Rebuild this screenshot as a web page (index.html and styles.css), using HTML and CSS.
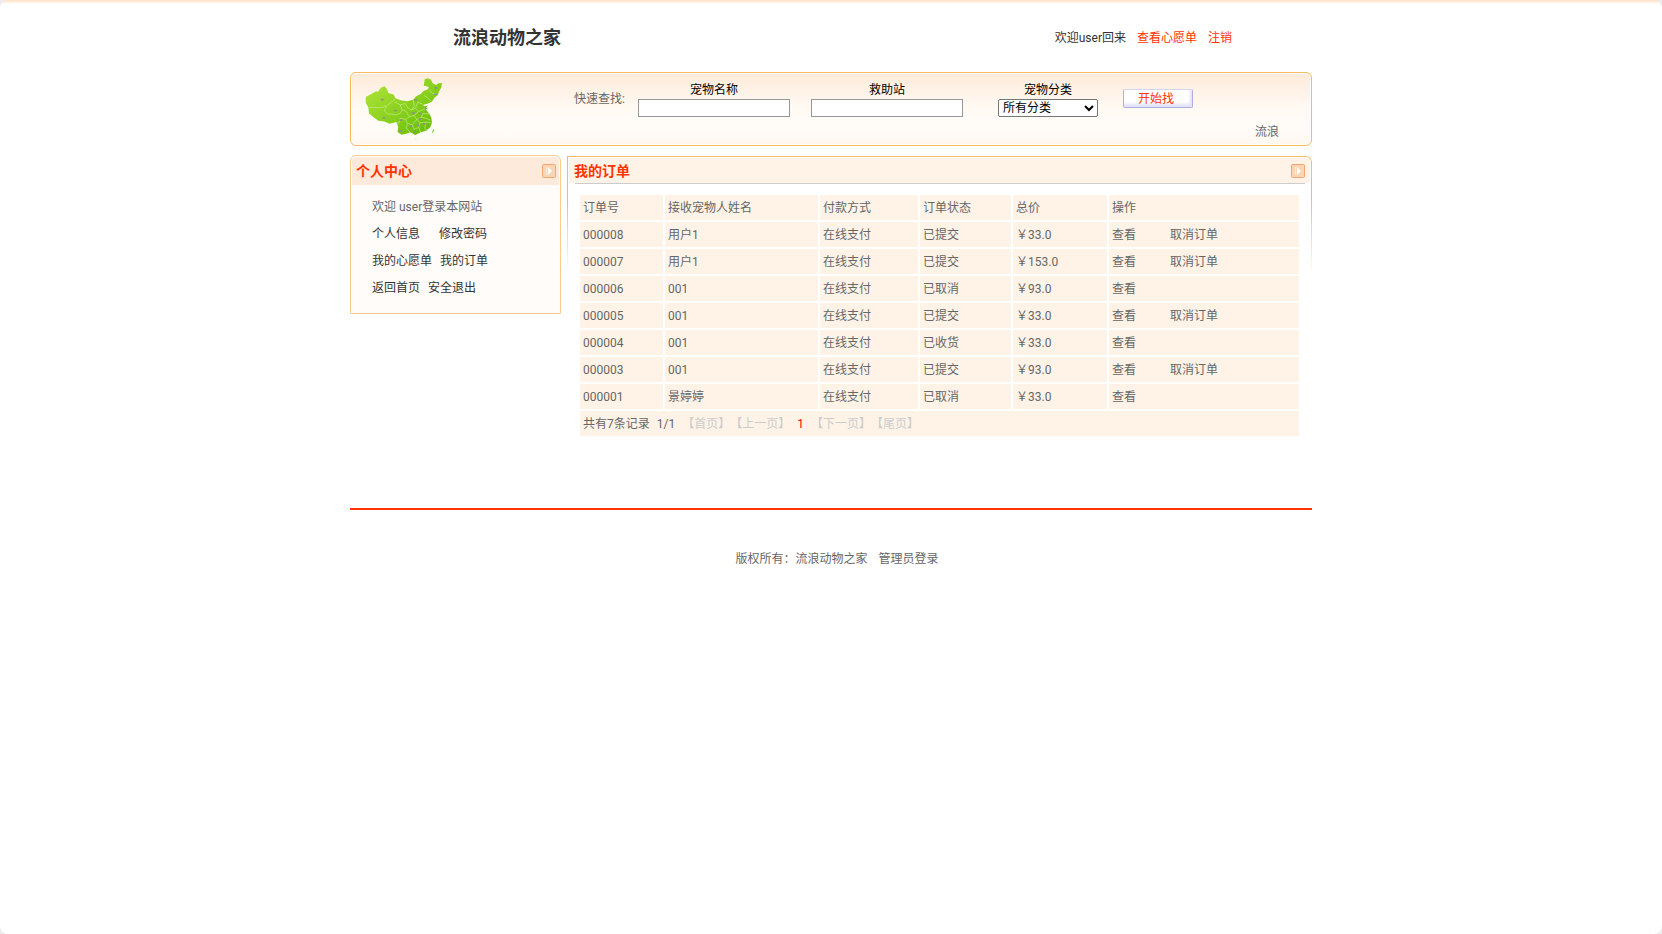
FILE: index.html
```html
<!DOCTYPE html>
<html lang="zh-CN">
<head>
<meta charset="UTF-8">
<meta name="viewport" content="width=device-width, initial-scale=1.0">
<title>流浪动物之家</title>
<link rel="stylesheet" href="styles.css">
</head>
<body>

<div class="wrap">

<header class="top">
<h1>流浪动物之家</h1>
<div class="user">
<span>欢迎user回来</span>
<a class="hot" href="#">查看心愿单</a>
<a class="hot" href="#">注销</a>
</div>
</header>

<form class="search" action="#">
<svg class="map" viewBox="45 25 230 187" aria-hidden="true">
<defs>
<linearGradient id="land" x1="0" y1="0" x2="1" y2="1">
<stop offset="0" stop-color="#b4e63c"/>
<stop offset="0.55" stop-color="#86cf1c"/>
<stop offset="1" stop-color="#5fb800"/>
</linearGradient>
</defs>
<path fill="url(#land)" d="M46 82L60 75L76 66L84 66L92 54L103 50L110 58L114 70L130 75L136 86L152 92L172 95L190 90L198 80L212 73L220 64L232 60L237 54L230 50L221 48L224 28L234 26L243 30L248 41L258 46L266 41L276 40L274 54L267 66L264 76L254 84L246 96L234 102L220 106L221 110L234 108L226 118L239 134L244 146L246 160L240 174L228 184L212 189L196 197L180 189L168 193L154 196L142 188L144 172L138 158L118 163L102 156L84 154L68 142L56 132L54 114L46 100Z"/>
<path fill="#6fc408" d="M246 190L250 178L252 184L248 190ZM190 188L200 189L196 197L190 194Z"/>
<path class="line" d="M56 113L90 115L108 110L124 98L132 90L136 86M108 110L102 125L112 133L138 136L150 132L156 120L150 106L132 97M150 106L165 102L172 114L184 122L192 110L190 92M156 120L168 126L178 142L166 150L150 146L146 162L138 158M184 122L196 116L204 98L218 104M196 116L206 126L226 118M178 142L192 138L206 126M192 138L200 150L214 144L218 132L239 134M166 150L172 162L186 166L200 150M172 162L168 176L180 189M186 166L192 180L206 174L210 160L200 150M206 174L212 189M210 160L228 158L244 160M228 158L224 176L228 184M214 144L228 146L240 152M222 78L232 84L242 94M237 60L246 70L263 76"/>
<path class="dots" d="M92 90h8M132 123h8M97 145h8M193 91h8M254 55h8M253 74h8M148 152h8M186 131h8M207 132h8M206 149h8M200 168h8M190 187h8M148 185h8M178 171h8M219 163h8M224 117h8"/>
<path class="line" d="M195 209h4"/>
</svg>

<span class="quick">快速查找:</span>

<div class="field">
<label for="pet-name">宠物名称</label>
<input type="text" id="pet-name">
</div>

<div class="field">
<label for="station">救助站</label>
<input type="text" id="station">
</div>

<div class="field field-kind">
<label for="kind">宠物分类</label>
<select id="kind">
<option>所有分类</option>
</select>
</div>

<button class="go" type="submit">开始找</button>
<span class="tag">流浪</span>
</form>

<div class="main">

<aside class="side">
<div class="side-head">
<h2>个人中心</h2>
<svg class="arrow" viewBox="0 0 14 14" aria-hidden="true"><rect x="0.5" y="0.5" width="13" height="13" rx="1"/><path class="bar" d="M4.5 3v8"/><path d="M6 3l4 4l-4 4z"/></svg>
</div>
<ul>
<li>欢迎 user登录本网站</li>
<li class="wide"><a href="#">个人信息</a><a href="#">修改密码</a></li>
<li><a href="#">我的心愿单</a><a href="#">我的订单</a></li>
<li><a href="#">返回首页</a><a href="#">安全退出</a></li>
</ul>
</aside>

<section class="orders">
<div class="orders-head">
<h2>我的订单</h2>
<svg class="arrow" viewBox="0 0 14 14" aria-hidden="true"><rect x="0.5" y="0.5" width="13" height="13" rx="1"/><path class="bar" d="M4.5 3v8"/><path d="M6 3l4 4l-4 4z"/></svg>
</div>

<table>
<colgroup>
<col class="c-no"><col class="c-name"><col class="c-pay"><col class="c-state"><col class="c-sum"><col>
</colgroup>
<thead>
<tr><th>订单号</th><th>接收宠物人姓名</th><th>付款方式</th><th>订单状态</th><th>总价</th><th>操作</th></tr>
</thead>
<tbody>
<tr><td>000008</td><td>用户1</td><td>在线支付</td><td>已提交</td><td>￥33.0</td><td><a href="#">查看</a><a href="#">取消订单</a></td></tr>
<tr><td>000007</td><td>用户1</td><td>在线支付</td><td>已提交</td><td>￥153.0</td><td><a href="#">查看</a><a href="#">取消订单</a></td></tr>
<tr><td>000006</td><td>001</td><td>在线支付</td><td>已取消</td><td>￥93.0</td><td><a href="#">查看</a></td></tr>
<tr><td>000005</td><td>001</td><td>在线支付</td><td>已提交</td><td>￥33.0</td><td><a href="#">查看</a><a href="#">取消订单</a></td></tr>
<tr><td>000004</td><td>001</td><td>在线支付</td><td>已收货</td><td>￥33.0</td><td><a href="#">查看</a></td></tr>
<tr><td>000003</td><td>001</td><td>在线支付</td><td>已提交</td><td>￥93.0</td><td><a href="#">查看</a><a href="#">取消订单</a></td></tr>
<tr><td>000001</td><td>景婷婷</td><td>在线支付</td><td>已取消</td><td>￥33.0</td><td><a href="#">查看</a></td></tr>
</tbody>
<tfoot>
<tr><td colspan="6">
<div class="pager">
<span>共有7条记录</span>
<span>1/1</span>
<span class="off">【首页】【上一页】</span>
<span class="now">1</span>
<span class="off">【下一页】【尾页】</span>
</div>
</td></tr>
</tfoot>
</table>
</section>

</div>

<footer class="foot">
<span>版权所有：流浪动物之家</span>
<a href="#">管理员登录</a>
</footer>

</div>

</body>
</html>
```
FILE: styles.css
```css
* {
box-sizing: border-box;
}

html {
background: #ececec;
}

body {
margin: 0;
min-height: 100vh;
border-radius: 8px;
background: #fff linear-gradient(#fddfc3, #fff) 0 0 / 100% 4px no-repeat;
font: 12px/18px Roboto, "Noto Sans CJK SC", sans-serif;
color: #666;
text-spacing-trim: space-all;
}

h1, h2, ul {
margin: 0;
padding: 0;
}

a {
color: #333;
text-decoration: none;
}

.wrap {
width: 962px;
max-width: 100%;
margin: 0 auto;
}

/* header */
.top {
display: flex;
justify-content: space-between;
align-items: center;
height: 72px;
padding: 3px 80px 0 103px;
}

.top h1 {
font-size: 18px;
line-height: 24px;
color: #333;
}

.user {
display: flex;
gap: 11px;
color: #333;
}

.user .hot {
color: #ff3300;
}

/* search bar */
.search {
display: flex;
height: 74px;
padding: 5px 14px;
border: 1px solid #f9b960;
border-radius: 6px;
box-shadow: inset 0 0 0 1px #fff;
background: linear-gradient(#feead9, #fff9f2 45%, #fffcf8 75%, #fff8f1);
}

.map {
flex: none;
width: 77px;
height: 62px;
}

.map .line {
fill: none;
stroke: #c6ec84;
stroke-width: 2;
}

.map .dots {
fill: none;
stroke: #8f8f8f;
stroke-width: 5;
}

.quick {
margin: 12px 13px 0 132px;
white-space: nowrap;
}

.field {
display: flex;
flex-direction: column;
width: 152px;
margin: 3px 21px 0 0;
text-align: center;
color: #000;
}

.field-kind {
width: 100px;
margin: 3px 25px 0 14px;
}

.field input {
width: 100%;
height: 18px;
padding: 1px 2px;
border: 1px solid #979797;
background: #fff;
font: inherit;
}

.field select {
width: 100%;
height: 18px;
padding: 0;
border: 1px solid #767676;
border-radius: 2px;
background: #fff;
font: inherit;
line-height: 16px;
color: #000;
}

.go {
width: 70px;
height: 19px;
margin-top: 11px;
padding: 0 4px 0 0;
border: 1px solid #b0ade0;
border-top-color: #d6d4ee;
border-radius: 2px;
box-shadow: inset -2px -3px 3px #e3e1f6;
background: #fff;
font: inherit;
line-height: 16px;
color: #ff3300;
}

.tag {
align-self: flex-end;
margin: 0 18px 0 auto;
line-height: 16px;
}

/* columns */
.main {
display: flex;
align-items: flex-start;
gap: 6px;
padding-top: 9px;
}

.side {
flex: none;
width: 211px;
border: 1px solid #fbcb8c;
border-radius: 6px 6px 1px 1px;
background: #fffcf9;
}

.side-head {
display: flex;
justify-content: space-between;
align-items: center;
height: 29px;
margin: 0 1px;
padding: 0 3px 1px 4px;
border-top: 1px solid #fff;
border-radius: 5px 5px 0 0;
background: #feeadb;
}

h2 {
font-size: 14px;
line-height: 20px;
color: #ff3300;
}

.arrow {
width: 14px;
height: 14px;
}

.arrow rect {
fill: #fcd5b5;
stroke: #f3a674;
}

.arrow path {
fill: #fff;
}

.arrow .bar {
stroke: #fde9d9;
}

.side ul {
padding: 9px 0 11px 21px;
list-style: none;
line-height: 27px;
}

.side li {
display: flex;
gap: 8px;
}

.side .wide {
gap: 19px;
}

.orders {
position: relative;
flex: 1;
margin-top: 1px;
padding: 2px 2px 0;
}

/* frame that fades out on both sides */
.orders::before {
content: "";
position: absolute;
inset: 0 0 auto;
height: 124px;
border: 1px solid #f9b960;
border-bottom: 0;
border-radius: 0 6px 0 0;
-webkit-mask-image: linear-gradient(#000 35%, transparent 95%);
mask-image: linear-gradient(#000 35%, transparent 95%);
pointer-events: none;
}

.orders-head {
display: flex;
justify-content: space-between;
align-items: center;
height: 26px;
padding: 0 5px 1px;
border-radius: 0 5px 0 0;
background:
linear-gradient(#ccc, #ccc) center bottom / calc(100% - 11px) 1px no-repeat,
linear-gradient(#fff3e7, #fff3e7) 0 0 / 100% 25px no-repeat;
}

table {
width: calc(100% - 18px);
margin: 9px 0 0 9px;
border-spacing: 2px;
table-layout: fixed;
}

.c-no { width: 83px; }
.c-name { width: 153px; }
.c-pay { width: 98px; }
.c-state { width: 91px; }
.c-sum { width: 94px; }

th, td {
height: 25px;
padding: 0 3px;
background: #fff3e7;
font-weight: normal;
text-align: left;
}

td a {
color: #666;
}

td a + a {
margin-left: 34px;
}

.pager {
display: flex;
gap: 7px;
}

.pager .off {
color: #ccc;
}

.pager .now {
color: #f00;
}

/* footer */
.foot {
display: flex;
justify-content: center;
gap: 11px;
margin-top: 70px;
padding: 40px 0 20px 12px;
border-top: 2px solid #ff3300;
}

.foot a {
color: #666;
}
```
